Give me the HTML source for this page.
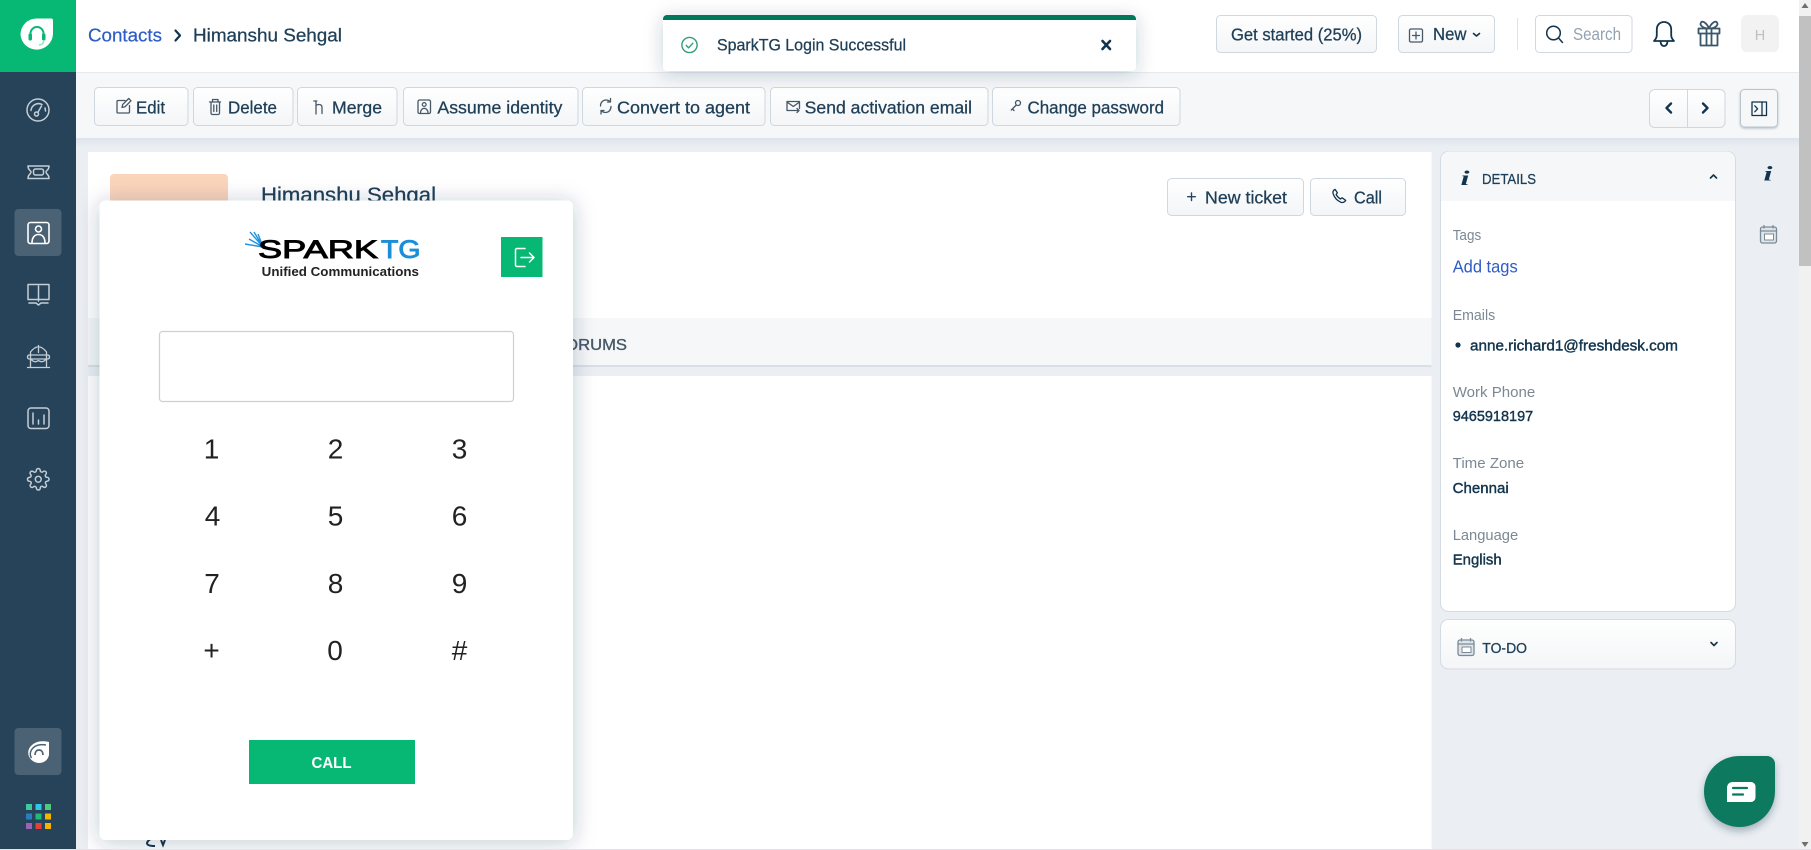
<!DOCTYPE html>
<html lang="en"><head><meta charset="utf-8"><title>Contacts - Himanshu Sehgal</title>
<style>
html,body{margin:0;padding:0;background:#ebeff3;width:1811px;height:850px;overflow:hidden}
svg{display:block}
text{font-family:"Liberation Sans",Arial,sans-serif;fill:#12344d}
.b{fill:url(#btn);stroke:#cfd7df;stroke-width:1}
.ic{fill:none;stroke:#475867;stroke-width:1.3;stroke-linecap:round;stroke-linejoin:round}
.cal{fill:none;stroke:#7b8a97;stroke-width:1.3;stroke-linecap:round;stroke-linejoin:round}
.s{fill:none;stroke:#c3ced6;stroke-width:1.5;stroke-linecap:round;stroke-linejoin:round}
.w{fill:none;stroke:#fff;stroke-width:1.6;stroke-linecap:round;stroke-linejoin:round}
.d{fill:none;stroke:#12344d;stroke-width:2;stroke-linecap:round;stroke-linejoin:round}
.m{fill:#1f3f57;stroke:#1f3f57;stroke-width:.28}
.l{fill:#7b8894;font-size:15px}
.v{font-size:15px;fill:#12344d;stroke:#12344d;stroke-width:.42}
.k{font-size:28px;fill:#222;text-anchor:middle}
</style></head><body>
<svg xmlns="http://www.w3.org/2000/svg" width="1811" height="850" viewBox="0 0 1811 850">
<defs>
<linearGradient id="btn" x1="0" y1="0" x2="0" y2="1"><stop offset="0" stop-color="#fff"/><stop offset="1" stop-color="#f3f5f7"/></linearGradient>
<linearGradient id="tb" x1="0" y1="0" x2="0" y2="1"><stop offset="0" stop-color="#dde3ea"/><stop offset="1" stop-color="#ebeff3"/></linearGradient>
<filter id="pop" x="-20%" y="-20%" width="140%" height="140%"><feDropShadow dx="0" dy="2" stdDeviation="11" flood-color="#12344d" flood-opacity=".26"/></filter>
<filter id="toast" x="-20%" y="-60%" width="140%" height="220%"><feDropShadow dx="0" dy="3" stdDeviation="9" flood-color="#12344d" flood-opacity=".22"/></filter>
<filter id="chat" x="-30%" y="-30%" width="160%" height="160%"><feDropShadow dx="0" dy="4" stdDeviation="4" flood-color="#12344d" flood-opacity=".35"/></filter>
<filter id="press" x="-20%" y="-20%" width="140%" height="140%"><feDropShadow dx="0" dy="1" stdDeviation="1" flood-color="#12344d" flood-opacity=".3"/></filter>
</defs>

<!-- page -->
<rect width="1811" height="850" fill="#ebeff3"/>
<rect x="1799" y="0" width="12" height="850" fill="#f1f1f1"/>
<rect x="1799" y="16" width="12" height="250" fill="#c1c1c1"/>
<path d="M1805 3l3.500 5h-7zM1805 847l3.500-5h-7z" fill="#6f6f6f"/>

<!-- main card -->
<rect x="88" y="152" width="1343.500" height="166" fill="#fff"/>
<rect x="88" y="318" width="1343.500" height="48" fill="#f5f7f9"/>
<rect x="88" y="365" width="1343.500" height="2" fill="#d9dfe6"/>
<rect x="88" y="376" width="1343.500" height="474" fill="#fff"/>
<path d="M110 178a4 4 0 0 1 4-4h110a4 4 0 0 1 4 4v112h-118z" fill="#fad4bb"/>
<text x="261" y="202" font-size="21.500" class="m" textLength="175" lengthAdjust="spacingAndGlyphs">Himanshu Sehgal</text>
<text x="555" y="350" font-size="15.500" textLength="72" lengthAdjust="spacingAndGlyphs" style="fill:#475867;stroke:#475867;stroke-width:.35">FORUMS</text>
<path d="M156 838c-5 0-8 2-9 5 0 2 3 3 8 3M161 840l2 5 2-5" fill="none" stroke="#12344d" stroke-width="2"/>

<rect x="1167.500" y="178.500" width="136" height="37" rx="4" class="b"/>
<path d="M1191.500 193v7.500M1187.700 196.700h7.600" class="d" style="stroke:#264560;stroke-width:1.400"/>
<text x="1205" y="203.300" font-size="17.300" class="m" textLength="82" lengthAdjust="spacingAndGlyphs">New ticket</text>
<rect x="1310.500" y="178.500" width="95" height="37" rx="4" class="b"/>
<path d="M1334 190c-1 1-1.500 2-.8 3.800 1.200 3.700 4 6.800 7.500 8.400 1.700.6 3 .4 4-.6l1-1.200-3.600-2.600-1.700 1.200c-1.800-1-3.200-2.500-4.300-4.400l1.300-1.700-2.300-3.500z" class="ic" style="stroke:#12344d"/>
<text x="1354" y="203.300" font-size="17.300" class="m" textLength="28" lengthAdjust="spacingAndGlyphs">Call</text>

<!-- right panel -->
<rect x="1440.500" y="151.500" width="295" height="460" rx="8" fill="#fff" stroke="#d5dbe2"/>
<path d="M1441 201v-41.500a8 8 0 0 1 8-8h278a8 8 0 0 1 8 8V201z" fill="#f5f7f9"/>
<text x="1460.500" y="185" font-size="21" font-weight="700" font-style="italic" style="font-family:'Liberation Serif',serif" textLength="9" lengthAdjust="spacingAndGlyphs">i</text>
<text x="1482" y="184" font-size="15" class="m" textLength="54" lengthAdjust="spacingAndGlyphs">DETAILS</text>
<path d="M1710.500 178l3-3 3 3" class="d" style="stroke-width:1.600"/>
<text x="1452.700" y="240" class="l" textLength="28.500" lengthAdjust="spacingAndGlyphs">Tags</text>
<text x="1452.700" y="272.700" font-size="17.300" style="fill:#2c5cc5" textLength="65" lengthAdjust="spacingAndGlyphs">Add tags</text>
<text x="1452.700" y="320" class="l" textLength="42.500" lengthAdjust="spacingAndGlyphs">Emails</text>
<circle cx="1458" cy="345" r="2.600" fill="#12344d"/>
<text x="1470" y="350.500" class="v" textLength="208" lengthAdjust="spacingAndGlyphs">anne.richard1@freshdesk.com</text>
<text x="1452.700" y="397" class="l" textLength="82.500" lengthAdjust="spacingAndGlyphs">Work Phone</text>
<text x="1452.700" y="421.200" class="v" textLength="80.500" lengthAdjust="spacingAndGlyphs">9465918197</text>
<text x="1452.700" y="468" class="l" textLength="71.500" lengthAdjust="spacingAndGlyphs">Time Zone</text>
<text x="1452.700" y="493.200" class="v" textLength="56" lengthAdjust="spacingAndGlyphs">Chennai</text>
<text x="1452.700" y="540" class="l" textLength="65.500" lengthAdjust="spacingAndGlyphs">Language</text>
<text x="1452.700" y="564.500" class="v" textLength="49" lengthAdjust="spacingAndGlyphs">English</text>

<rect x="1440.500" y="619.500" width="295" height="49.500" rx="8" fill="url(#btn)" stroke="#d5dbe2"/>
<g><rect x="1458" y="640" width="16" height="15.500" rx="2" class="cal" style="fill:#dfe4e9"/><path d="M1458 644h16M1461.500 638.500v2.500M1470.500 638.500v2.500" class="cal"/><rect x="1462" y="647" width="9" height="5.500" class="cal" style="fill:#fff;stroke-width:1"/></g>
<text x="1482.300" y="653" font-size="15" class="m" textLength="44.700" lengthAdjust="spacingAndGlyphs">TO-DO</text>
<path d="M1711 642.500l3 3 3-3" class="d" style="stroke-width:1.600"/>

<text x="1763.500" y="180.500" font-size="21" font-weight="700" font-style="italic" style="font-family:'Liberation Serif',serif" textLength="9" lengthAdjust="spacingAndGlyphs">i</text>
<g><rect x="1760.500" y="227" width="16" height="16" rx="2" class="cal" style="fill:#dfe4e9"/><path d="M1760.500 231h16M1764 225.500v2.500M1773 225.500v2.500" class="cal"/><rect x="1764.500" y="234" width="9" height="6" class="cal" style="fill:#fff;stroke-width:1"/></g>

<!-- header -->
<rect x="76" y="0" width="1723" height="72" fill="#fff"/>
<rect x="76" y="72" width="1723" height="1" fill="#e6eaef"/>
<text x="88" y="41.500" font-size="18.500" style="fill:#2c5cc5;stroke:#2c5cc5;stroke-width:.2" textLength="74" lengthAdjust="spacingAndGlyphs">Contacts</text>
<path d="M175.500 30.500l4.500 5-4.500 5" class="d" style="stroke-width:2.200"/>
<text x="193" y="41.500" font-size="18.500" class="m" textLength="149" lengthAdjust="spacingAndGlyphs">Himanshu Sehgal</text>

<rect x="1216.500" y="15.500" width="160" height="37" rx="4" class="b"/>
<text x="1231" y="40.700" font-size="17.300" class="m" textLength="131" lengthAdjust="spacingAndGlyphs">Get started (25%)</text>
<rect x="1398.500" y="15.500" width="96" height="37" rx="4" class="b"/>
<rect x="1409.500" y="29" width="13" height="13" rx="1.500" class="ic"/>
<path d="M1416 32v7M1412.500 35.500h7" class="ic"/>
<text x="1433" y="40" font-size="17.300" class="m" textLength="33.500" lengthAdjust="spacingAndGlyphs">New</text>
<path d="M1473.500 33.500l3 2.500 3-2.500" class="d" style="stroke-width:1.600"/>
<rect x="1517" y="18" width="1" height="32" fill="#dfe4e9"/>
<rect x="1535.500" y="15.500" width="96.500" height="37" rx="4" fill="#fff" stroke="#cfd7df"/>
<circle cx="1553.500" cy="33" r="6.800" class="ic" style="stroke:#12344d;stroke-width:1.500"/>
<path d="M1558.500 38l4 4.500" class="ic" style="stroke:#12344d;stroke-width:1.500"/>
<text x="1573" y="40" font-size="17.300" style="fill:#92a2b1" textLength="48" lengthAdjust="spacingAndGlyphs">Search</text>
<path d="M1654 41h20c-2-2-2.800-3.500-2.800-6v-5.500c0-4.500-3-7.500-7.200-7.500s-7.200 3-7.200 7.500V35c0 2.500-.8 4-2.800 6zM1660.500 41.500c.3 3 1.700 4.500 3.500 4.500s3.200-1.500 3.500-4.500" class="d" style="stroke-width:1.800"/>
<path d="M1698.500 28.500h21v5h-21zM1700.500 33.500h17v12h-17zM1706.500 28.500v17M1711.500 28.500v17M1709 28.500c-2.500-6-6.500-8-8-6s1 6 8 6zM1709 28.500c2.500-6 6.500-8 8-6s-1 6-8 6z" class="d" style="stroke:#3a566b;stroke-width:1.800"/>
<rect x="1741" y="15" width="38" height="37" rx="6" fill="#f3f2f3"/>
<text x="1760" y="40" font-size="14.500" text-anchor="middle" style="fill:#bcbfc3">H</text>

<!-- toolbar -->
<rect x="76" y="73" width="1723" height="65" fill="#f5f7f9"/>
<rect x="76" y="138" width="1723" height="9" fill="url(#tb)"/>
<rect x="94.500" y="87.500" width="93.500" height="38" rx="4" class="b"/>
<rect x="193.500" y="87.500" width="99.500" height="38" rx="4" class="b"/>
<rect x="297.500" y="87.500" width="99.500" height="38" rx="4" class="b"/>
<rect x="403.500" y="87.500" width="174.500" height="38" rx="4" class="b"/>
<rect x="582.500" y="87.500" width="182.500" height="38" rx="4" class="b"/>
<rect x="770.500" y="87.500" width="217.500" height="38" rx="4" class="b"/>
<rect x="992.500" y="87.500" width="187.500" height="38" rx="4" class="b"/>

<path d="M125 100.500h-7a1 1 0 0 0-1 1v10.500a1 1 0 0 0 1 1h10.500a1 1 0 0 0 1-1V105.500M122 107.500l.7-3 6-6 2.300 2.300-6 6z" class="ic"/>
<text x="136" y="113.700" font-size="17.300" class="m" textLength="29" lengthAdjust="spacingAndGlyphs">Edit</text>
<path d="M209.500 102h11M211 102v11a1.500 1.500 0 0 0 1.500 1.500h5.500a1.500 1.500 0 0 0 1.500-1.500v-11M212.500 102v-2.500h5.500v2.500M213.800 105v6.500M216.700 105v6.500" class="ic"/>
<text x="228" y="113.700" font-size="17.300" class="m" textLength="49" lengthAdjust="spacingAndGlyphs">Delete</text>
<path d="M316 101.500v12.500M313.800 101h3M316 106c.5-1.200 2-1.500 3-1.500 2 0 3 1 3 3V113.500" class="ic"/>
<text x="332" y="113.700" font-size="17.300" class="m" textLength="50" lengthAdjust="spacingAndGlyphs">Merge</text>
<rect x="418" y="100" width="12.500" height="13.500" rx="1.500" class="ic"/><circle cx="424.200" cy="104.500" r="1.900" class="ic"/><path d="M420.500 113c0-3 1.700-4.700 3.700-4.700s3.800 1.700 3.800 4.700" class="ic"/>
<text x="437.400" y="113.700" font-size="17.300" class="m" textLength="125" lengthAdjust="spacingAndGlyphs">Assume identity</text>
<path d="M600.500 106c0-3.500 2.300-6 5.500-6 1.500 0 3 .5 4 1.800M611 106.500c0 3.500-2.300 6-5.500 6-1.500 0-3-.5-4-1.800M610.500 98.500v3.500h-3M601 114v-3.500h3" class="ic"/>
<text x="617" y="113.700" font-size="17.300" class="m" textLength="133" lengthAdjust="spacingAndGlyphs">Convert to agent</text>
<path d="M797 110.500h-10v-9h12.500v7M787 102l6.300 4.500 6.200-4.500M794 110.500h4.500M797 108.500l2 2-2 2" class="ic"/>
<text x="804.700" y="113.700" font-size="17.300" class="m" textLength="167.300" lengthAdjust="spacingAndGlyphs">Send activation email</text>
<circle cx="1018" cy="103" r="2.500" class="ic"/><path d="M1016.300 105l-5 5M1012.500 109l1.500 1.500" class="ic"/>
<text x="1027.500" y="113.700" font-size="17.300" class="m" textLength="136.500" lengthAdjust="spacingAndGlyphs">Change password</text>

<rect x="1649.500" y="89.500" width="75.500" height="38" rx="5" class="b"/>
<rect x="1687" y="90" width="1" height="37" fill="#cfd7df"/>
<path d="M1671 103.500l-4.500 4.500 4.500 4.500" class="d" style="stroke-width:2.400"/>
<path d="M1703 103.500l4.500 4.500-4.500 4.500" class="d" style="stroke-width:2.400"/>
<rect x="1740.500" y="89.500" width="37" height="37.500" rx="4" fill="#f5f7f9" stroke="#b9c4cf" filter="url(#press)"/>
<rect x="1752" y="102" width="14.500" height="13.500" class="ic" style="stroke:#12344d"/><path d="M1762 102v13.500M1754.800 105.800l2.800 3-2.800 3" class="ic" style="stroke:#12344d"/>

<!-- sidebar -->
<rect x="0" y="0" width="76" height="850" fill="#274359"/>
<rect x="0" y="0" width="76" height="72" fill="#06b874"/>
<path d="M20.500 35a16 16 0 0 1 16-16.500H51a2 2 0 0 1 2 2V34a16.300 16.300 0 0 1-32.500 1z" fill="#fff"/>
<path d="M30.500 38v-4.500a6.500 6.500 0 0 1 13 0V38" fill="none" stroke="#06b874" stroke-width="2"/>
<rect x="28.500" y="33.500" width="3.500" height="7" rx="1.500" fill="#06b874"/><rect x="42" y="33.500" width="3.500" height="7" rx="1.500" fill="#06b874"/>
<path d="M43.500 41c0 2.500-2 4-4.500 4" fill="none" stroke="#9adfc3" stroke-width="1.500"/>

<rect x="14.500" y="209" width="47" height="47" rx="4" fill="#4b6274"/>
<rect x="14.500" y="728" width="47" height="47" rx="4" fill="#4b6274"/>

<circle cx="38" cy="110" r="11" class="s"/><path d="M31 110.500a7.500 7.500 0 0 1 11-6M45 108c.3 1 .5 2 .5 3M41.500 106l-3.700 6.500" class="s"/><circle cx="36.500" cy="114" r="2" class="s"/>
<path d="M28 166h21c0 2-.5 3 -1.500 4s-1.500 1-1.500 2 .5 1.500 1.500 2.500 1.500 2 1.500 4H28c0-2 .5-3 1.500-4s1.500-1.500 1.500-2.500-.5-1-1.500-2-1.500-2-1.500-4z" class="s"/><rect x="33.500" y="169" width="10" height="6" rx="2" class="s"/>
<rect x="28" y="222.500" width="21" height="21" rx="2.500" class="w"/><circle cx="38.500" cy="229" r="3" class="w"/><path d="M32 243c0-6 3-8.500 6.500-8.500S45 237 45 243" class="w"/>
<path d="M38.500 286v15M28 284.500h21v15H28zM29 303h7l2.500 2 2.500-2h7" class="s"/>
<path d="M30.500 367v-15c2-2.500 5-5 8-5.500 3 .5 6 3 8 5.500v15M27.500 367.500h22M38.500 345.500v7M29 355c-2 .5-2 3.500 0 4h19c2-.5 2-3.500 0-4zM31 359c2 3 5 3.500 7.500 1.500 2.500 2 5.500 1.500 7.500-1.500" class="s" style="stroke-width:1.300"/>
<rect x="28" y="408" width="21" height="20.500" rx="3" class="s"/><path d="M33 413v11M38.500 420v4M44 415v9" class="s"/>
<g transform="translate(26.500,467.500) scale(.98)"><path class="s" d="M12 15a3 3 0 1 0 0-6 3 3 0 0 0 0 6z"/><path class="s" d="M19.400 15a1.650 1.650 0 0 0 .33 1.820l.06.06a2 2 0 0 1 0 2.830 2 2 0 0 1-2.830 0l-.06-.06a1.650 1.650 0 0 0-1.820-.33 1.650 1.650 0 0 0-1 1.510V21a2 2 0 0 1-2 2 2 2 0 0 1-2-2v-.09A1.650 1.650 0 0 0 9 19.400a1.650 1.650 0 0 0-1.820.33l-.06.06a2 2 0 0 1-2.830 0 2 2 0 0 1 0-2.830l.06-.06a1.650 1.650 0 0 0 .33-1.820 1.650 1.650 0 0 0-1.510-1H3a2 2 0 0 1-2-2 2 2 0 0 1 2-2h.09A1.650 1.650 0 0 0 4.600 9a1.650 1.650 0 0 0-.33-1.820l-.06-.06a2 2 0 0 1 0-2.830 2 2 0 0 1 2.830 0l.06.06a1.650 1.650 0 0 0 1.820.33H9a1.650 1.650 0 0 0 1-1.510V3a2 2 0 0 1 2-2 2 2 0 0 1 2 2v.09a1.650 1.650 0 0 0 1 1.510 1.650 1.650 0 0 0 1.820-.33l.06-.06a2 2 0 0 1 2.830 0 2 2 0 0 1 0 2.830l-.06.06a1.650 1.650 0 0 0-.33 1.820V9a1.650 1.650 0 0 0 1.510 1H21a2 2 0 0 1 2 2 2 2 0 0 1-2 2h-.09a1.650 1.650 0 0 0-1.510 1z"/></g>

<path d="M49 742c-7-1.500-12-.5-15 1.500-5 3-7 8-5 13 2 4 6 6.500 10 6.500 5 0 9-3 10-8z" fill="#fff"/>
<path d="M46 745c-6-1-10 0-13 3-3 3-3.500 7-1.500 10" fill="none" stroke="#4b6274" stroke-width="1.500"/>
<path d="M35 755c0-3 1.500-5 4-5s4 2 4 5" fill="none" stroke="#4b6274" stroke-width="1.700"/>

<g>
<rect x="26" y="804" width="6" height="6" fill="#3ecaa0"/><rect x="35.500" y="804" width="6" height="6" fill="#2fc6e8"/><rect x="45" y="804" width="6" height="6" fill="#4ec97d"/>
<rect x="26" y="813.500" width="6" height="6" fill="#2c7cc0"/><rect x="35.500" y="813.500" width="6" height="6" fill="#1fbb74"/><rect x="45" y="813.500" width="6" height="6" fill="#f5b300"/>
<rect x="26" y="823" width="6" height="6" fill="#9b62b5"/><rect x="35.500" y="823" width="6" height="6" fill="#e63f3a"/><rect x="45" y="823" width="6" height="6" fill="#f5b300"/>
</g>

<!-- toast -->
<g filter="url(#toast)"><rect x="663" y="15" width="473" height="56" rx="4" fill="#fff"/></g>
<path d="M663 20v-1a4 4 0 0 1 4-4h465a4 4 0 0 1 4 4v1z" fill="#00795b"/>
<circle cx="689.500" cy="45" r="7.600" fill="none" stroke="#2f9e7d" stroke-width="1.400"/>
<path d="M685.800 45l2.800 2.800 4.600-5" fill="none" stroke="#2f9e7d" stroke-width="1.400"/>
<text x="717" y="50.700" font-size="16.700" class="m" textLength="189" lengthAdjust="spacingAndGlyphs">SparkTG Login Successful</text>
<path d="M1102.500 41l7.500 8M1110 41l-7.500 8" class="d" style="stroke-width:2.600"/>

<!-- softphone popup -->
<rect x="99.500" y="200.500" width="473.500" height="639.500" rx="6" fill="#fff" filter="url(#pop)"/>
<path d="M263 247L250 232M263 247l-14-8M263 247l-18-3M263 247l-9-15M263 247l-5-13" stroke="#1f93e0" stroke-width="1.400" fill="none"/>
<text x="258" y="258" font-size="25" font-weight="400" style="fill:#000;stroke:#000;stroke-width:.9" textLength="120" lengthAdjust="spacingAndGlyphs">SPARK</text>
<text x="381" y="258" font-size="25" font-weight="400" style="fill:#1a8fd8;stroke:#1a8fd8;stroke-width:.9" textLength="39.500" lengthAdjust="spacingAndGlyphs">TG</text>
<text x="261.700" y="276" font-size="13" font-weight="700" style="fill:#222" textLength="157.300" lengthAdjust="spacingAndGlyphs">Unified Communications</text>
<rect x="501" y="237" width="41.500" height="40" fill="#06b874"/>
<path d="M525 248.500h-8a1.500 1.500 0 0 0-1.500 1.500v15a1.500 1.500 0 0 0 1.500 1.500h8M521 257.500h12.500M529.500 253l4.500 4.500-4.500 4.500" fill="none" stroke="#fff" stroke-width="1.500" stroke-linecap="round" stroke-linejoin="round"/>
<rect x="159.500" y="331.500" width="354" height="70" rx="3" fill="#fff" stroke="#cfcfcf" stroke-width="1.200"/>
<text x="211.500" y="458.600" class="k">1</text><text x="335.500" y="458.600" class="k">2</text><text x="459.500" y="458.600" class="k">3</text>
<text x="212.500" y="525.600" class="k">4</text><text x="335.500" y="525.600" class="k">5</text><text x="459.500" y="525.600" class="k">6</text>
<text x="212" y="593" class="k">7</text><text x="335.500" y="593" class="k">8</text><text x="459.500" y="593" class="k">9</text>
<text x="211.500" y="660" class="k">+</text><text x="335" y="660" class="k">0</text><text x="459.500" y="660" class="k">#</text>
<rect x="249" y="740" width="166" height="44" fill="#06b874"/>
<text x="311.500" y="768" font-size="16" font-weight="700" style="fill:#fff" textLength="40" lengthAdjust="spacingAndGlyphs">CALL</text>

<!-- chat bubble -->
<path d="M1739.500 756H1767a8 8 0 0 1 8 8v27.500a35.500 35.500 0 0 1-71 0c0-20 15.500-35.500 35.500-35.500z" fill="#087a5e" filter="url(#chat)"/>
<path d="M1733 782h18a4.500 4.500 0 0 1 4.500 4.500v11a4.500 4.500 0 0 1-4.500 4.500h-24v-14c0-4 2.500-6 6-6z" fill="#fff"/>
<path d="M1733 788h14M1733 794.500h10" stroke="#087a5e" stroke-width="2.200" stroke-linecap="round"/>

<rect x="0" y="849" width="1811" height="1" fill="#e7dfe5"/>
</svg>
</body></html>
